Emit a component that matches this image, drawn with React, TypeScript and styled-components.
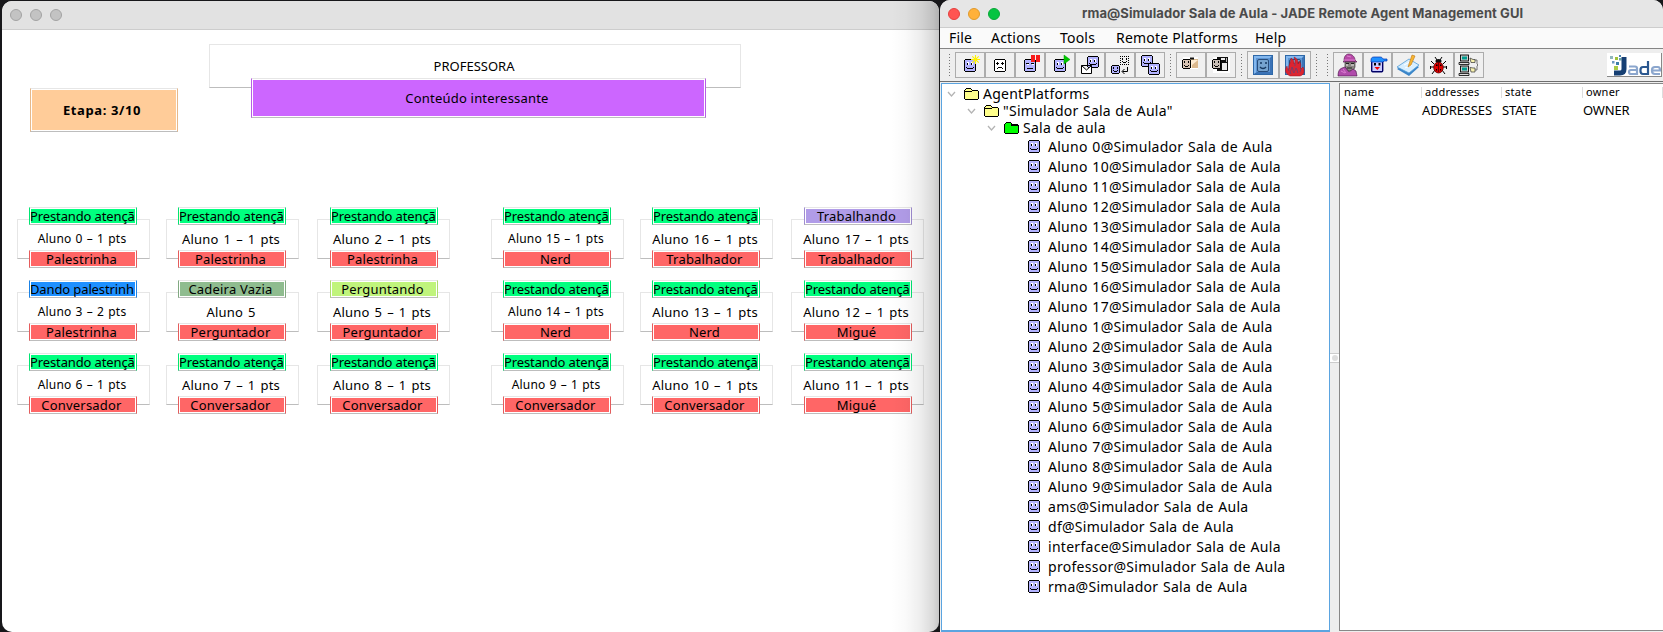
import React from "react";
import styled, { createGlobalStyle, css } from "styled-components";

const GlobalStyle = createGlobalStyle`
  * { box-sizing: border-box; }
  html, body { margin: 0; height: 632px; overflow: hidden; background: #17171a; }
  body { font-family: "Noto Sans", "Liberation Sans", sans-serif; color: #000; }
`;

const Desktop = styled.div`
  display: flex;
  width: 1663px;
  height: 632px;
  padding-left: 2px;
  background: #17171a;
`;

/* ---------- classroom window ---------- */

const ClassroomWindow = styled.section`
  position: relative;
  display: flex;
  flex-direction: column;
  width: 937px;
  height: 631px;
  margin-top: 1px;
  border-radius: 10px;
  overflow: hidden;
  background: #fff;
  &::after {
    content: "";
    position: absolute;
    inset: 0 0 0 auto;
    width: 48px;
    background: linear-gradient(90deg, rgba(0,0,0,0), rgba(0,0,0,.02) 30%, rgba(0,0,0,.07) 62%, rgba(0,0,0,.15) 88%, rgba(0,0,0,.22));
    pointer-events: none;
  }
`;

const TitleBar = styled.header<{ $height: number; $bg: string }>`
  display: flex;
  align-items: center;
  flex: none;
  height: ${(p) => p.$height}px;
  background: ${(p) => p.$bg};
  border-bottom: 1px solid #cdcdcd;
`;

const Lights = styled.div<{ $left: number }>`
  display: flex;
  gap: 8px;
  margin-left: ${(p) => p.$left}px;
`;

const Light = styled.span<{ $fill: string; $edge: string }>`
  width: 12px;
  height: 12px;
  border-radius: 50%;
  background: ${(p) => p.$fill};
  border: 1px solid ${(p) => p.$edge};
`;

const TopArea = styled.div`
  display: flex;
  align-items: flex-start;
  height: 177px;
  padding: 14px 0 0 28px;
`;

const bevel = css<{ $color: string }>`
  border: 1px solid color-mix(in srgb, ${(p) => p.$color} 90%, #000);
  border-top-color: #e6e6e6;
  border-bottom-color: #bdbdbd;
  background: ${(p) => p.$color};
  box-shadow: inset 0 0 0 1px #fff;
`;

const StageBox = styled.div<{ $color: string }>`
  ${bevel}
  display: flex;
  align-items: center;
  justify-content: center;
  width: 148px;
  height: 44px;
  margin-top: 44px;
  font-size: 13px;
  font-weight: 700;
  letter-spacing: 0.6px;
  padding-right: 4px;
`;

const TeacherArea = styled.div`
  display: flex;
  flex-direction: column;
  align-items: center;
  margin-left: 31px;
`;

const TeacherDesk = styled.div`
  width: 532px;
  height: 44px;
  border: 1px solid #e6e6e6;
  border-bottom-color: #bdbdbd;
  padding-right: 2px;
  text-align: center;
  font-size: 13px;
  line-height: 43px;
`;

const TeacherTopic = styled.div<{ $color: string }>`
  ${bevel}
  width: 455px;
  height: 40px;
  margin: -10px 0 0 7px;
  text-align: center;
  font-size: 13px;
  line-height: 39px;
  letter-spacing: 0.2px;
  padding-right: 3px;
`;

const Room = styled.div`
  display: grid;
  grid-template-columns: 149px 151px 174px 149px 151px 133px;
  grid-auto-rows: 73px;
  padding-left: 15px;
`;

const Seat = styled.div<{ $inset: number }>`
  display: flex;
  flex-direction: column;
  width: 133px;
  padding-left: ${(p) => p.$inset}px;
`;

const Desk = styled.div<{ $small: boolean; $inset: number }>`
  width: 133px;
  height: 40px;
  margin-top: -6px;
  margin-left: ${(p) => -p.$inset}px;
  border: 1px solid #e6e6e6;
  border-bottom-color: #bdbdbd;
  text-align: center;
  white-space: nowrap;
  font-size: ${(p) => (p.$small ? 12 : 13)}px;
  line-height: ${(p) => (p.$small ? 37 : 38)}px;
  letter-spacing: 0.2px;
  word-spacing: ${(p) => (p.$small ? 0.8 : 1.4)}px;
  padding-right: 3px;
`;

const Tag = styled.div<{ $color: string; $long?: boolean; $low?: boolean }>`
  ${bevel}
  position: relative;
  width: 108px;
  height: 18px;
  margin-top: ${(p) => (p.$low ? -9 : 0)}px;
  padding: 1px ${(p) => (p.$long ? 2 : 4)}px 0 ${(p) => (p.$long ? 0 : 1)}px;
  font-size: 13px;
  line-height: 14px;
  letter-spacing: ${(p) => (p.$long ? -0.12 : 0.2)}px;
  text-align: ${(p) => (p.$long ? "left" : "center")};
`;

const TagText = styled.span`
  display: block;
  height: 15px;
  overflow: hidden;
  white-space: nowrap;
`;

/* ---------- agent management window ---------- */

const ManagerWindow = styled.section`
  display: flex;
  flex-direction: column;
  width: 723px;
  height: 632px;
  margin-left: 1px;
  border-radius: 10px 10px 0 0;
  overflow: hidden;
  background: #eee;
`;

const WindowTitle = styled.h1`
  margin: 0 0 2px 82px;
  font: 700 13px/20px Inter, "Liberation Sans", sans-serif;
  letter-spacing: 0.09px;
  color: #4b4b4b;
  white-space: nowrap;
`;

const MenuBar = styled.nav`
  display: flex;
  gap: 18px;
  flex: none;
  height: 21px;
  padding-left: 9px;
  background: #fafafa;
  border-bottom: 1px solid #858585;
  font-size: 14px;
  line-height: 19px;
  letter-spacing: 0.2px;
`;

const MenuItem = styled.span<{ $width: number }>`
  width: ${(p) => p.$width}px;
  white-space: nowrap;
`;

const ToolBar = styled.div`
  display: flex;
  align-items: center;
  flex: none;
  height: 33px;
  background: #eee;
  border-bottom: 1px solid #6e6e6e;
`;

const Grip = styled.span<{ $left: number; $right: number }>`
  width: 1px;
  height: 23px;
  margin: 0 ${(p) => p.$right}px 0 ${(p) => p.$left}px;
  background: repeating-linear-gradient(#777 0 1px, transparent 1px 3px);
`;

const ToolGroup = styled.div<{ $height?: number }>`
  display: flex;
  height: ${(p) => p.$height ?? 26}px;
`;

const ToolButton = styled.button<{ $width?: number }>`
  display: grid;
  place-content: center;
  width: ${(p) => p.$width ?? 30}px;
  padding: 0;
  border: 0;
  overflow: hidden;
  background: #f0f0f0;
  box-shadow: inset 0 0 0 1px #acacac;
`;

const Logo = styled.div`
  width: 55px;
  height: 24px;
  margin-left: auto;
  margin-right: 1px;
  background: #fff;
  border-right: 1px solid #888;
  border-bottom: 1px solid #888;
`;

const Panes = styled.div`
  display: flex;
  flex: 1;
  padding: 1px 0 0 1px;
`;

const TreePane = styled.div`
  width: 389px;
  height: 549px;
  padding-top: 1px;
  background: #fff;
  border: 1px solid #5ba4e0;
  border-bottom-width: 2px;
  font-size: 14px;
`;

const Branch = styled.div<{ $depth: number }>`
  display: flex;
  align-items: center;
  height: 17px;
  padding-left: ${(p) => 5 + p.$depth * 20}px;
  letter-spacing: 0.25px;
  word-spacing: 0.5px;
  white-space: nowrap;
  svg { flex: none; }
`;

const BranchLabel = styled.span`
  margin-left: 4px;
  line-height: 17px;
`;

const Leaf = styled.div`
  display: flex;
  align-items: center;
  gap: 8px;
  height: 20px;
  padding-left: 86px;
  letter-spacing: 0.28px;
  word-spacing: 0.7px;
  white-space: nowrap;
`;

const Splitter = styled.div`
  display: flex;
  flex-direction: column;
  width: 9px;
  padding-top: 270px;
  background: #eee;
`;

const Knob = styled.span`
  display: grid;
  place-items: center;
  height: 10px;
  background: #fff;
  border-top: 1px solid #ccc;
  border-bottom: 1px solid #ccc;
  &::before {
    content: "";
    width: 6px;
    height: 6px;
    border-radius: 50%;
    background: #ddd;
  }
`;

const TablePane = styled.div`
  flex: 1;
  height: 548px;
  padding-top: 3px;
  background: #fff;
  border: 1px solid #888;
  border-right: 0;
`;

const TableRow = styled.div`
  display: grid;
  grid-template-columns: 81px 80px 81px 80px;
  height: 16px;
  padding-left: 1px;
  font-size: 13px;
  line-height: 15px;
`;

const HeadCell = styled.span`
  height: 11px;
  padding-left: 3px;
  border-right: 1px solid #ddd;
  font-size: 11px;
  line-height: 10px;
  letter-spacing: 0.25px;
`;

const Cell = styled.span`
  padding-left: 1px;
  letter-spacing: -0.15px;
  &:nth-child(n + 2) { padding-left: 0; }
`;

/* ---------- icons ---------- */

const PALETTE: Record<string, string> = {
  K: "#000", B: "#b3b3ff", W: "#fff",
};

type PixelsProps = { rows: string[]; x?: number; y?: number; fill?: string };

function Pixels({ rows, x = 0, y = 0, fill }: PixelsProps) {
  const cells: React.ReactElement[] = [];
  rows.forEach((row, r) => {
    for (let c = 0; c < row.length; ) {
      let end = c + 1;
      while (end < row.length && row[end] === row[c]) end++;
      if (row[c] !== ".") {
        const color = row[c] === "B" && fill ? fill : PALETTE[row[c]];
        cells.push(<rect key={`${r}-${c}`} x={x + c} y={y + r} width={end - c} height={1} fill={color} />);
      }
      c = end;
    }
  });
  return <g shapeRendering="crispEdges">{cells}</g>;
}

const FACE = [
  ".KKKKKKKKKK.",
  "KBBBBBBBBBBK",
  "KBBBBBBBBBBK",
  "KBBWWBBWWBBK",
  "KBBKWBBKWBBK",
  "KBBKWBBKWBBK",
  "KBBBBBBBBBBK",
  "KBBBBBBBBBBK",
  "KBKBBBBBBKBK",
  "KBBKKKKKKBBK",
  "KBBBBBBBBBBK",
  "KBBBBBBBBBBK",
  ".KKKKKKKKKK.",
];

const SHORT_FACE = FACE.filter((_, i) => i !== 6);

const SAD = [
  ".KKKKKKKKKK.",
  "KWWWWWWWWWWK",
  "KWWWWWWWWWWK",
  "KWWKWWWWKWWK",
  "KWKKKWWKKKWK",
  "KWWKWWWWKWWK",
  "KWWWWWWWWWWK",
  "KWWWWWWWWWWK",
  "KWWWKKKKWWWK",
  "KWWKWWWWKWWK",
  "KWWWWWWWWWWK",
  "KWWWWWWWWWWK",
  ".KKKKKKKKKK.",
];

const FLAT = [
  ".KKKKKKKKKK.",
  "KBBBBBBBBBBK",
  "KBBBBBBBBBBK",
  "KBBBBBBBBBBK",
  "KBKKKBBKKKBK",
  "KBBWWBBBWWBK",
  "KBBBBBBBBBBK",
  "KBBBBBBBBBBK",
  "KBBBBBBBBBBK",
  "KBBKKKKKKBBK",
  "KBBBBBBBBBBK",
  "KBBBBBBBBBBK",
  ".KKKKKKKKKK.",
];

const MINI = [
  ".KKKKKKK.",
  "KBBBBBBBK",
  "KBKBBBKBK",
  "KBKBBBKBK",
  "KBBBBBBBK",
  "KBKBBBKBK",
  "KBBKKKBBK",
  "KBBBBBBBK",
  ".KKKKKKK.",
];

const DASHED = [
  "K.K.K.K.K",
  ".........",
  "K.K...K.K",
  "..K...K..",
  "K.......K",
  "..K...K..",
  "K..KKK..K",
  ".........",
  "K.K.K.K.K",
];

const Icon = ({ w = 30, h = 26, children }: { w?: number; h?: number; children: React.ReactNode }) => (
  <svg width={w} height={h} viewBox={`0 0 ${w} ${h}`} aria-hidden="true">{children}</svg>
);

const StartIcon = () => (
  <Icon>
    <Pixels rows={FACE} x={9} y={7} />
    <path d="M20.500 3v9M16 7.500h9M17.300 4.300l6.400 6.400M23.700 4.300l-6.400 6.400" stroke="#fff200" strokeWidth="1.100" />
  </Icon>
);
const KillIcon = () => <Icon><Pixels rows={SAD} x={9} y={7} /></Icon>;
const SuspendIcon = () => (
  <Icon>
    <Pixels rows={FLAT} x={9} y={7} />
    <path d="M16 3h4v7h-4zM21 3h4v7h-4z" fill="#f81c1c" />
  </Icon>
);
const ResumeIcon = () => (
  <Icon>
    <Pixels rows={FACE} x={9} y={7} />
    <path d="M19 3l6 4.500-6 4.500z" fill="#00c800" stroke="#00a000" strokeWidth=".5" />
  </Icon>
);
const MessageIcon = () => (
  <Icon>
    <Pixels rows={SHORT_FACE} x={12} y={4} />
    <path d="M6.500 13.500h10v8h-10zM6.500 13.500l5 4.500 5-4.500" fill="#fff" stroke="#000" />
  </Icon>
);
const MigrateIcon = () => (
  <Icon>
    <Pixels rows={DASHED} x={15} y={4} />
    <Pixels rows={MINI} x={6} y={13} />
    <path d="M22.500 15v4.500h-5M19.500 17l-2.500 2.500 2.500 2.500" fill="none" stroke="#000" />
  </Icon>
);
const CloneIcon = () => (
  <Icon>
    <Pixels rows={SHORT_FACE} x={6} y={3} />
    <Pixels rows={SHORT_FACE} x={13} y={11} />
  </Icon>
);
const LoadIcon = () => (
  <Icon>
    <path d="M7 5h15v12H7z" fill="#fff" />
    <path d="M12 7h10v9H12z" fill="#d8b98c" />
    <path d="M14 5.500h4v2h-4z" fill="#111" />
    <path d="M15 8h7v8h-7z" fill="#fdebd2" />
    <path d="M16 13l6-5v8h-6z" fill="#dcb98e" />
    <Pixels rows={[...MINI.slice(0, 5), "KBBBBBBBK", ...MINI.slice(5)]} x={6} y={7} fill="#d8c4b4" />
  </Icon>
);
const SaveIcon = () => (
  <Icon>
    <path d="M7 5h17v16H7z" fill="#fff" />
    <path d="M11 5h11v14H11z" fill="#111" />
    <path d="M15 6h4v2h-4zM16 11h5v7h-5z" fill="#eee" />
    <path d="M20.500 6v4" stroke="#bbb" />
    <Pixels rows={[...MINI.slice(0, 5), "KBBBBBBBK", ...MINI.slice(5)]} x={6} y={7} fill="#c9beb6" />
  </Icon>
);
const BlueTile = () => (
  <>
    <rect x="6" y="4" width="20" height="20" fill="#2e68a8" />
    <path d="M7 5h18l-3 3H10v13l-3 2z" fill="#83b7ee" />
    <rect x="9" y="7" width="14" height="14" fill="#5d95d3" />
    <path d="M25 5v18H8l3-2h12V8z" fill="#3b73b7" />
    <rect x="10.500" y="8.500" width="11" height="12" rx="1.500" fill="#76a3cf" stroke="#284d7c" />
    <path d="M13 12h2M18 12h2M13 16c1.500 2 4.500 2 6 0" fill="none" stroke="#173961" strokeWidth="1.300" />
  </>
);
const AddPlatformIcon = () => <Icon w={32} h={28}><BlueTile /></Icon>;
const BurnPlatformIcon = () => (
  <Icon w={32} h={28}>
    <BlueTile />
    <path d="M11 25c-6-3-5-7-3-10 0 2 1 3 2 3-1-4 2-6 2-11 3 2 3 4 3 6 2-2 1-4 0-7 4 2 4 4 4 7 1-1 1-2 1-3 3 3 1 6 2 8l2-2c2 4 1 8-3 9z" fill="#dc2430" stroke="#a01420" strokeWidth=".5" />
    <path d="M12 23c-2-3 1-4 1-7 2 3 0 4 2 6 0-2 2-3 2-5 2 3 1 4 2 5M10 20l-1-2M21 21l1-3M16 15v-3" fill="none" stroke="#743e6c" strokeWidth="1" />
  </Icon>
);
const SnifferIcon = () => (
  <Icon>
    <path d="M11 9c0-5 2-7 5-7s6 3 6 6l2 2H10z" fill="#b749a7" stroke="#4b1547" strokeWidth=".6" />
    <path d="M12 10h10v5l-2 4h-5l-3-4z" fill="#8a8582" stroke="#222" strokeWidth=".6" />
    <path d="M13 11.500h3M18 11.500h3M14 16h5" stroke="#222" />
    <path d="M13 13h2M18 13h3" stroke="#e4e4e4" />
    <path d="M5 24c0-4 1-7 4-8l3-1 4 5 4-3 3 2 1 5z" fill="#b04bab" stroke="#441343" strokeWidth=".6" />
    <path d="M11 8h11M14 4l4 1M8 19l4 2M10 17l3 4" stroke="#e48ada" strokeWidth=".8" />
  </Icon>
);
const DummyIcon = () => (
  <Icon>
    <rect x="8.700" y="7.700" width="11" height="12" rx="1" fill="#ccccff" stroke="#000066" strokeWidth="1.400" />
    <path d="M8 8c0-2 1-3 3-3h6c2 0 2.500 1 3 2h4v2h-3l-1 1H8z" fill="#1e90ff" stroke="#0030b0" strokeWidth=".7" />
    <path d="M11 11h2v2.500h-2zM15.500 11h2v2.500h-2z" fill="#000" />
    <path d="M11.500 15h5.500l-2.700 3z" fill="#f00000" />
  </Icon>
);
const NotesIcon = () => (
  <Icon w={32}>
    <path d="M5 17l12-8 10 6-10 9z" fill="#3a85c8" />
    <path d="M5 15l12-8 10 6-10 8z" fill="#d8efff" stroke="#4f9ad6" strokeWidth=".8" />
    <path d="M12 13l6-3M13 16l7-3" stroke="#fff" />
    <path d="M20 3l-3 9-1 3 3-2 4-9z" fill="#f7b531" stroke="#bd7718" strokeWidth=".6" />
  </Icon>
);
const BugIcon = () => (
  <Icon>
    <path d="M11 5l2 3M18 5l-2 3M10 12L7 9M10 15H6M11 18l-3 4M19 12l3-3M19 15h4M18 18l3 4M6.500 14v3M22.500 14v3" fill="none" stroke="#000" />
    <ellipse cx="14.500" cy="9" rx="3" ry="2" fill="#111" />
    <ellipse cx="14.500" cy="15.500" rx="4.800" ry="5.500" fill="#e00000" stroke="#400" strokeWidth=".7" />
    <path d="M14.500 10v10" stroke="#500" strokeWidth=".8" />
    <path d="M12 12.500h1.500V14H12zM16 12.500h1.500V14H16zM12 17h1v1.500h-1zM16 17h1v1.500h-1z" fill="#000" />
  </Icon>
);
const Computer = ({ y }: { y: number }) => (
  <g transform={`translate(5 ${y})`}>
    <rect x="1.500" y=".5" width="8" height="6" fill="#ccc" stroke="#000" strokeWidth=".9" />
    <rect x="3" y="2" width="5" height="3" fill="#009b8e" />
    <path d="M0 8h10v2H0z" fill="#ddd" stroke="#000" strokeWidth=".8" />
  </g>
);
const IntrospectorIcon = () => (
  <Icon>
    <Computer y={2.5} />
    <Computer y={13.5} />
    <path d="M20 8h3v4l1 1-1 1v4h-3" fill="none" stroke="#555" strokeWidth=".8" />
    <path d="M16 6l3 1.500h2v3h-4zM16 15.500l3 .5h2v4h-4z" fill="#f8f2b0" stroke="#333" strokeWidth=".7" />
  </Icon>
);

const JadeLogo = () => (
  <svg width="54" height="23" viewBox="0 0 54 23" aria-label="Jade">
    <path d="M3 3h3v3H3z" fill="#8fb7bd" /><path d="M8 4h3v3H8z" fill="#9fc23a" />
    <path d="M5 8h2.500v2.500H5z" fill="#6f99bf" /><path d="M9 9h3v3H9z" fill="#3d7fa8" />
    <path d="M12 5h2.500v2.500H12z" fill="#6ba4a8" /><path d="M7 13h4v4H7z" fill="#a9cb44" />
    <path d="M12 2h2v2h-2z" fill="#4e84b0" />
    <path d="M17 4v12q0 4-4 4H7" fill="none" stroke="#163f73" strokeWidth="5" />
    <g fill="none" stroke="#8ba6cd" strokeWidth="2.200">
      <path d="M22 13.500h6q2 0 2 2V21h-6q-2 0-2-2t2-2h6" />
      <path d="M41 8v13h-5q-2.500 0-2.500-3v-1q0-3 2.500-3h5" stroke="#2a578f" />
      <path d="M53 21h-5q-3 0-3-3v-1q0-3 3-3h3q2 0 2 3.500h-7" />
    </g>
  </svg>
);

const Chevron = () => (
  <svg width="9" height="8" viewBox="0 0 9 8" aria-hidden="true">
    <path d="M1 2l3.500 4L8 2" fill="none" stroke="#b4b4b4" strokeWidth="1.300" />
  </svg>
);

const FolderSlot = styled.span`
  display: flex;
  margin-left: 8px;
`;

const Folder = ({ open }: { open?: boolean }) => (
  <svg width="15" height="13" viewBox="0 0 15 13" shapeRendering="crispEdges" aria-hidden="true">
    <path d="M1 2h1V1h5v1h1v1h6v1h1v8h-1v1H1v-1H0V3h1z" fill="#000" />
    <path d={open ? "M2 2h5v2h7v8H1V3h1z" : "M2 2h5v1h1v1h6v8H1V3h1z"} fill={open ? "#00ff00" : "#ffff8c"} />
    <path d={open ? "M7 4.500h7" : "M1 4.500h7"} stroke="#000" />
  </svg>
);

/* ---------- data ---------- */

const STATUS: Record<string, string> = {
  "Prestando atenção": "#00ff7f",
  "Dando palestrinha": "#1e90ff",
  "Cadeira Vazia": "#8fbc8f",
  "Perguntando": "#c0f47c",
  "Trabalhando": "#b19ce8",
};

const P = "Prestando atenção";

const seats: [string, string, string][] = [
  [P, "Aluno 0 – 1 pts", "Palestrinha"],
  [P, "Aluno 1 – 1 pts", "Palestrinha"],
  [P, "Aluno 2 – 1 pts", "Palestrinha"],
  [P, "Aluno 15 – 1 pts", "Nerd"],
  [P, "Aluno 16 – 1 pts", "Trabalhador"],
  ["Trabalhando", "Aluno 17 – 1 pts", "Trabalhador"],
  ["Dando palestrinha", "Aluno 3 – 2 pts", "Palestrinha"],
  ["Cadeira Vazia", "Aluno 5", "Perguntador"],
  ["Perguntando", "Aluno 5 – 1 pts", "Perguntador"],
  [P, "Aluno 14 – 1 pts", "Nerd"],
  [P, "Aluno 13 – 1 pts", "Nerd"],
  [P, "Aluno 12 – 1 pts", "Migué"],
  [P, "Aluno 6 – 1 pts", "Conversador"],
  [P, "Aluno 7 – 1 pts", "Conversador"],
  [P, "Aluno 8 – 1 pts", "Conversador"],
  [P, "Aluno 9 – 1 pts", "Conversador"],
  [P, "Aluno 10 – 1 pts", "Conversador"],
  [P, "Aluno 11 – 1 pts", "Migué"],
];

const agents = [
  "Aluno 0", "Aluno 10", "Aluno 11", "Aluno 12", "Aluno 13", "Aluno 14", "Aluno 15", "Aluno 16",
  "Aluno 17", "Aluno 1", "Aluno 2", "Aluno 3", "Aluno 4", "Aluno 5", "Aluno 6", "Aluno 7",
  "Aluno 8", "Aluno 9", "ams", "df", "interface", "professor", "rma",
];

const menus: [string, number][] = [
  ["File", 24], ["Actions", 51], ["Tools", 38], ["Remote Platforms", 121], ["Help", 32],
];

const branches = ["AgentPlatforms", '"Simulador Sala de Aula"', "Sala de aula"];

export default function App() {
  return (
    <Desktop>
      <GlobalStyle />
      <ClassroomWindow>
        <TitleBar $height={29} $bg="#e2e2e2">
          <Lights $left={8}>
            {[0, 1, 2].map((i) => <Light key={i} $fill="#c3c3c3" $edge="#a3a3a3" />)}
          </Lights>
        </TitleBar>
        <TopArea>
          <StageBox $color="#ffcc99">Etapa: 3/10</StageBox>
          <TeacherArea>
            <TeacherDesk>PROFESSORA</TeacherDesk>
            <TeacherTopic $color="#cc66ff">Conteúdo interessante</TeacherTopic>
          </TeacherArea>
        </TopArea>
        <Room>
          {seats.map(([status, name, role], i) => {
            const inset = i % 3 === 2 ? 13 : 12;
            return (
              <Seat key={i} $inset={inset}>
                <Tag $color={STATUS[status]} $long={status.length > 14}>
                  <TagText>{status}</TagText>
                </Tag>
                <Desk $small={i % 3 === 0} $inset={inset}>{name}</Desk>
                <Tag $color="#ff6666" $low><TagText>{role}</TagText></Tag>
              </Seat>
            );
          })}
        </Room>
      </ClassroomWindow>

      <ManagerWindow>
        <TitleBar $height={28} $bg="#e6e6e6">
          <Lights $left={8}>
            <Light $fill="#ff5552" $edge="#e5403e" />
            <Light $fill="#ffb13b" $edge="#e09a2c" />
            <Light $fill="#06c441" $edge="#0aa838" />
          </Lights>
          <WindowTitle>rma@Simulador Sala de Aula - JADE Remote Agent Management GUI</WindowTitle>
        </TitleBar>
        <MenuBar>
          {menus.map(([label, width]) => <MenuItem key={label} $width={width}>{label}</MenuItem>)}
        </MenuBar>
        <ToolBar>
          <Grip $left={9} $right={5} />
          <ToolGroup>
            <ToolButton><StartIcon /></ToolButton>
            <ToolButton><KillIcon /></ToolButton>
            <ToolButton><SuspendIcon /></ToolButton>
            <ToolButton><ResumeIcon /></ToolButton>
            <ToolButton><MessageIcon /></ToolButton>
            <ToolButton><MigrateIcon /></ToolButton>
            <ToolButton><CloneIcon /></ToolButton>
          </ToolGroup>
          <Grip $left={5} $right={5} />
          <ToolGroup>
            <ToolButton><LoadIcon /></ToolButton>
            <ToolButton><SaveIcon /></ToolButton>
          </ToolGroup>
          <Grip $left={5} $right={5} />
          <ToolGroup $height={28}>
            <ToolButton $width={32}><AddPlatformIcon /></ToolButton>
            <ToolButton $width={32}><BurnPlatformIcon /></ToolButton>
          </ToolGroup>
          <Grip $left={5} $right={10} />
          <Grip $left={0} $right={5} />
          <ToolGroup>
            <ToolButton><SnifferIcon /></ToolButton>
            <ToolButton $width={29}><DummyIcon /></ToolButton>
            <ToolButton $width={32}><NotesIcon /></ToolButton>
            <ToolButton><BugIcon /></ToolButton>
            <ToolButton><IntrospectorIcon /></ToolButton>
          </ToolGroup>
          <Logo><JadeLogo /></Logo>
        </ToolBar>
        <Panes>
          <TreePane>
            {branches.map((label, depth) => (
              <Branch key={label} $depth={depth}>
                <Chevron />
                <FolderSlot><Folder open={depth === 2} /></FolderSlot>
                <BranchLabel>{label}</BranchLabel>
              </Branch>
            ))}
            {agents.map((name) => (
              <Leaf key={name}>
                <Icon w={12} h={13}><Pixels rows={FACE} /></Icon>
                <span>{name}@Simulador Sala de Aula</span>
              </Leaf>
            ))}
          </TreePane>
          <Splitter><Knob /></Splitter>
          <TablePane>
            <TableRow>
              {["name", "addresses", "state", "owner"].map((t) => <HeadCell key={t}>{t}</HeadCell>)}
            </TableRow>
            <TableRow>
              {["NAME", "ADDRESSES", "STATE", "OWNER"].map((t) => <Cell key={t}>{t}</Cell>)}
            </TableRow>
          </TablePane>
        </Panes>
      </ManagerWindow>
    </Desktop>
  );
}
